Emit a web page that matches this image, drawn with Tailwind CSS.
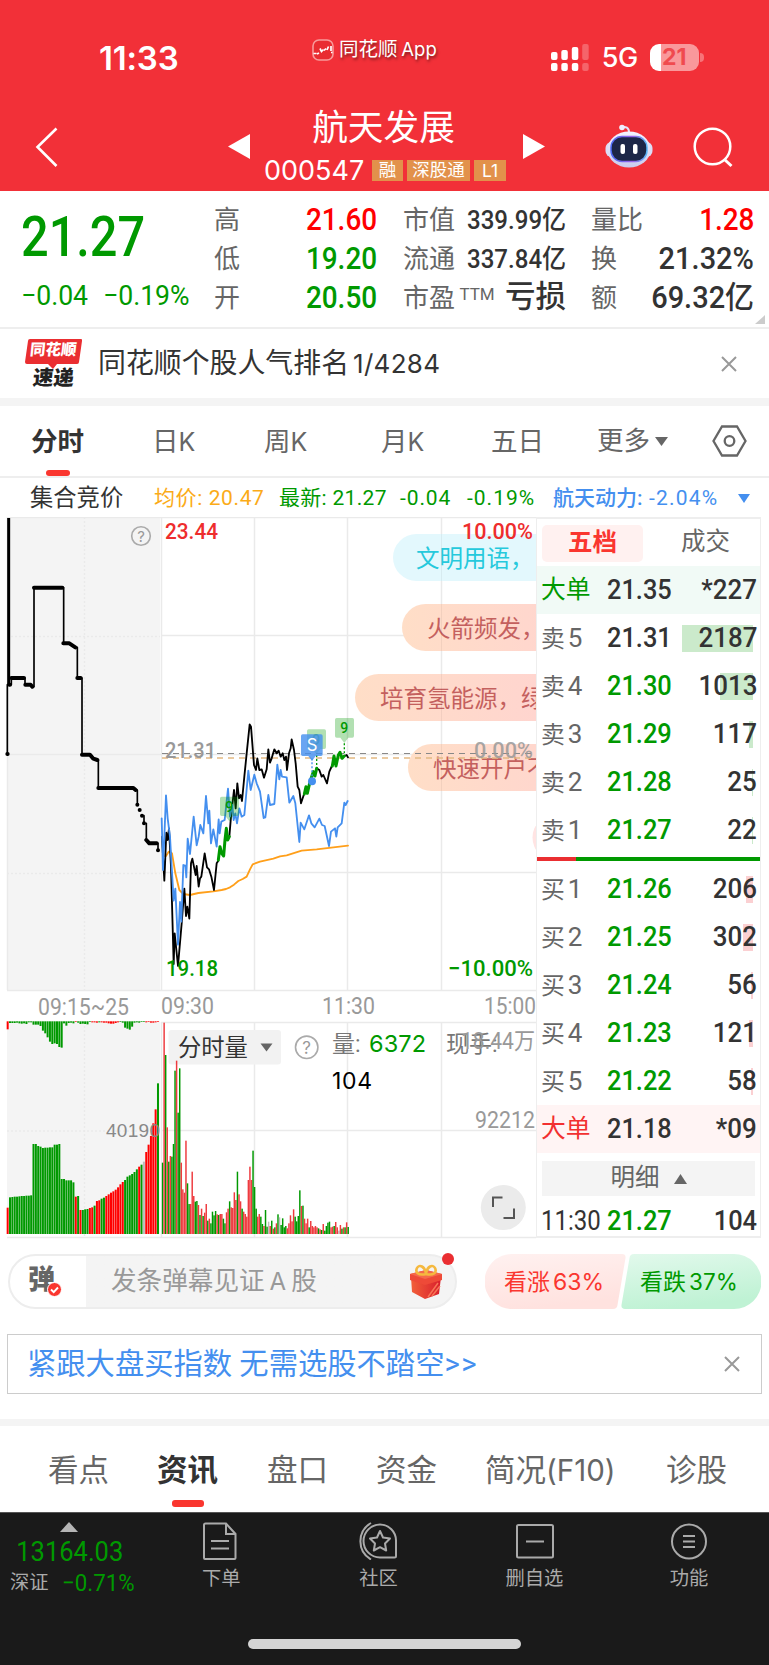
<!DOCTYPE html>
<html lang="zh-CN">
<head>
  <meta charset="UTF-8" />
  <meta name="viewport" content="width=device-width, initial-scale=1.0" />
  <title>航天发展 000547</title>
  <script src="https://cdn.jsdelivr.net/npm/@tailwindcss/browser@4"></script>
</head>
<body class="bg-white">
<div class="w-[769px] h-[1665px] overflow-hidden flex flex-col bg-white text-[#333] leading-none whitespace-nowrap font-[Roboto,'Noto_Sans_CJK_SC',sans-serif]">

  <!-- Header -->
  <header class="h-[191px] shrink-0 bg-[#f23038] text-white">
    <div class="h-[100px] flex items-start">
      <div class="ml-[99px] mt-[42px] w-[83px] font-[Inter] font-semibold text-[33px] leading-[32px] tracking-[-0.2px]">11:33</div>
      <div class="ml-[130px] mt-[37px] flex items-center gap-[5px] [text-shadow:1px_2px_3px_rgba(0,0,0,.5)]">
        <svg class="w-[22px] h-[22px]" viewBox="0 0 22 22"><rect x="1" y="1" width="20" height="20" rx="6" fill="#e92c31" stroke="#f79a9a" stroke-width="1.6"/><path d="M1.500 14.500h3M5 15l2-1M8 9.500l1.500 3 2-2M12 11.500l2-2M15 11l1.500-3.500M19 7v5M19 13.500h1.500" stroke="#fff" stroke-width="1.700" fill="none"/></svg>
        <span class="text-[19.5px] leading-[25px]">同花顺 <span class="font-[Inter] text-[18.5px] -ml-[1px]">App</span></span>
      </div>
      <svg class="ml-[114px] mt-[43px] w-[40px] h-[28px] fill-white" viewBox="0 0 40 28">
        <rect x="0" y="9" width="6.500" height="8" rx="2"/><rect x="10.300" y="7" width="6.500" height="10" rx="2"/><rect x="20.800" y="4" width="6.500" height="13" rx="2"/><rect x="31.200" y="1" width="6.500" height="16" rx="2" opacity=".25"/>
        <rect x="0" y="20" width="6.500" height="8" rx="2"/><rect x="10.300" y="20" width="6.500" height="8" rx="2"/><rect x="20.800" y="20" width="6.500" height="8" rx="2"/><rect x="31.200" y="20" width="6.500" height="8" rx="2" opacity=".25"/>
      </svg>
      <div class="ml-[11px] mt-[44px] w-[37px] font-[Inter] font-medium text-[27px] leading-[28px] tracking-[-0.5px]">5G</div>
      <div class="ml-[11px] mt-[44px] w-[49px] h-[27px] rounded-[9px] bg-linear-to-r from-white from-22% to-[#f9989b] to-22% flex items-center justify-center font-[Inter] font-bold text-[23px] text-[#f04a4f]">21</div>
      <div class="ml-[1px] mt-[53px] w-[4px] h-[9px] rounded-r-full bg-[#f77378]"></div>
    </div>
    <div class="h-[91px] flex items-start">
      <svg class="ml-[35px] mt-[26px] w-[24px] h-[42px]" viewBox="0 0 24 42"><path d="M21.500 2.500L2.500 21l19 19" fill="none" stroke="#fff" stroke-width="2.600"/></svg>
      <svg class="ml-[169px] mt-[34px] w-[22px] h-[25px]" viewBox="0 0 22 25"><path d="M22 0v25L0 12.500z" fill="#fff"/></svg>
      <div class="ml-[15px] w-[242px] flex flex-col items-center">
        <div class="mt-[8px] h-[40px] leading-[40px] text-[35.7px] -ml-[5px]">航天发展</div>
        <div class="mt-[12px] flex items-center self-stretch h-[21px] text-[17.5px]">
          <span class="w-[108px] -ml-px font-[Inter] text-[27px]">000547</span>
          <span class="w-[31px] h-[21px] leading-[21px] text-center bg-[#e2914b]">融</span>
          <span class="ml-[4px] w-[63px] h-[21px] leading-[21px] text-center bg-[#e2914b]">深股通</span>
          <span class="ml-[4px] w-[32px] h-[21px] leading-[21px] text-center bg-[#e2914b] font-[Inter]">L1</span>
        </div>
      </div>
      <svg class="ml-[16px] mt-[34px] w-[22px] h-[25px]" viewBox="0 0 22 25"><path d="M0 0v25l22-12.500z" fill="#fff"/></svg>
      <svg class="ml-[60px] mt-[24px] w-[48px] h-[44px]" viewBox="0 0 48 44">
        <defs>
          <linearGradient id="shell" x2="0" y2="1"><stop stop-color="#f4f3ff"/><stop offset="1" stop-color="#c9cbee"/></linearGradient>
          <linearGradient id="rim"><stop stop-color="#4d6cf5"/><stop offset=".6" stop-color="#9a62e8"/><stop offset="1" stop-color="#59b8f7"/></linearGradient>
        </defs>
        <path d="M16 3.500c5-1.500 8 0 8 5" fill="none" stroke="#e5e4fa" stroke-width="2"/><circle cx="17" cy="3.500" r="2.800" fill="#efeefe"/>
        <rect x=".5" y="18" width="47" height="15" rx="6" fill="#dcdcf6"/>
        <ellipse cx="24" cy="25.500" rx="21.500" ry="18" fill="url(#shell)"/>
        <rect x="6" y="12.500" width="36" height="25" rx="11" fill="#1c2647" stroke="url(#rim)" stroke-width="1.500"/>
        <rect x="15.500" y="20" width="4.500" height="10" rx="2" fill="#fff"/><rect x="28" y="20" width="4.500" height="10" rx="2" fill="#fff"/>
      </svg>
      <svg class="ml-[40px] mt-[27px] w-[42px] h-[42px]" viewBox="0 0 42 42" fill="none" stroke="#fff" stroke-width="2.500"><circle cx="19.500" cy="19.500" r="17.800"/><path d="M31.500 32.500l7 6.500" stroke-width="3"/></svg>
    </div>
  </header>

  <!-- Quote -->
  <section class="h-[138px] shrink-0 border-b-2 border-[#eee] flex relative">
    <div class="w-[214px] pl-[21px] text-[#090]">
      <div class="mt-[20px] h-[52px] leading-[52px] text-[55px] font-medium origin-left scale-x-[.885]">21.27</div>
      <div class="mt-[17px] flex text-[28px] leading-[32px]">
        <span class="w-[82px] origin-left scale-x-[.95]">−0.04</span><span class="origin-left scale-x-[.95]">−0.19%</span>
      </div>
    </div>
    <div class="w-[163px] pt-[9px] text-[26px] text-[#666]">
      <div class="flex h-[39px] items-center justify-between"><span>高</span><b class="font-medium text-[31px] text-[#f00] origin-right scale-x-[.9]">21.60</b></div>
      <div class="flex h-[39px] items-center justify-between"><span>低</span><b class="font-medium text-[31px] text-[#090] origin-right scale-x-[.9]">19.20</b></div>
      <div class="flex h-[39px] items-center justify-between"><span>开</span><b class="font-medium text-[31px] text-[#090] origin-right scale-x-[.9]">20.50</b></div>
    </div>
    <div class="ml-[26px] w-[163px] pt-[9px] text-[26px] text-[#666]">
      <div class="flex h-[39px] items-center justify-between"><span>市值</span><b class="font-medium text-[26px] text-[#333] origin-right scale-x-[.925]">339.99亿</b></div>
      <div class="flex h-[39px] items-center justify-between"><span>流通</span><b class="font-medium text-[26px] text-[#333] origin-right scale-x-[.925]">337.84亿</b></div>
      <div class="flex h-[39px] items-center justify-between"><span>市盈</span><span class="text-[17px] -mt-[6px] -ml-[6px]">TTM</span><b class="font-medium text-[30.5px] text-[#333]">亏损</b></div>
    </div>
    <div class="ml-[25px] w-[163px] pt-[9px] text-[26px] text-[#666]">
      <div class="flex h-[39px] items-center justify-between"><span>量比</span><b class="font-medium text-[31px] text-[#f00] origin-right scale-x-[.9]">1.28</b></div>
      <div class="flex h-[39px] items-center justify-between"><span>换</span><b class="font-medium text-[31px] text-[#333] origin-right scale-x-[.935]">21.32%</b></div>
      <div class="flex h-[39px] items-center justify-between"><span>额</span><b class="font-medium text-[31px] text-[#333] origin-right scale-x-[.935]">69.32亿</b></div>
    </div>
    <svg class="absolute right-[4px] bottom-[3px] w-[10px] h-[9px]" viewBox="0 0 10 9"><path d="M10 0v9H0z" fill="#ccc"/></svg>
  </section>

  <!-- News -->
  <section class="h-[69px] shrink-0 flex items-center pl-[24px] pr-[32px]">
    <div class="w-[58px] flex flex-col items-center">
      <div class="relative w-[57px] h-[25px] flex items-center justify-center">
        <svg class="absolute inset-0 w-[57px] h-[30px]" viewBox="0 0 57 30"><path d="M5 0h51a1.500 1.500 0 0 1 1 2l-3 21a2 2 0 0 1-2 2H32l-4 5-5-5H2a2 2 0 0 1-2-2L3 2a2 2 0 0 1 2-2z" fill="#ea2e31"/></svg>
        <span class="relative text-white font-black text-[15.5px] -skew-x-6">同花顺</span>
      </div>
      <div class="mt-[3px] text-[20.5px] leading-[22px] font-black text-[#222] -skew-x-6">速递</div>
    </div>
    <div class="ml-[16px] text-[27.9px]">同花顺个股人气排名<span class="ml-[4px] font-[Inter] text-[26px] tracking-[.3px]">1/4284</span></div>
    <svg class="ml-auto w-[16px] h-[16px]" viewBox="0 0 16 16"><path d="M1 1l14 14M15 1L1 15" stroke="#999" stroke-width="2"/></svg>
  </section>
  <div class="h-[8px] shrink-0 bg-[#f4f4f4]"></div>

  <!-- Period tabs -->
  <nav class="h-[72px] shrink-0 border-b-2 border-[#eee] flex text-[26.5px] text-[#666] leading-[72px]">
    <div class="relative ml-[31px] w-[121px] font-bold text-[#333]">分时<i class="absolute left-[15px] bottom-0 w-[24px] h-[6px] rounded-[3px] bg-[#fa362f]"></i></div>
    <div class="w-[112px]">日<span class="font-[Inter] text-[25px]">K</span></div>
    <div class="w-[117px]">周<span class="font-[Inter] text-[25px]">K</span></div>
    <div class="w-[110px]">月<span class="font-[Inter] text-[25px]">K</span></div>
    <div class="w-[106px]">五日</div>
    <div class="w-[115px] flex items-center gap-[5px]">更多<svg class="w-[13px] h-[9px]" viewBox="0 0 13 9"><path d="M0 0h13L6.500 9z" fill="#666"/></svg></div>
    <svg class="self-center w-[35px] h-[32px]" viewBox="0 0 35 32" fill="none" stroke="#666" stroke-width="2.300"><path d="M10 1.500h15L33.500 16 25 30.500H10L1.500 16z"/><circle cx="17.500" cy="16" r="4.800"/></svg>
  </nav>

  <!-- Price summary line -->
  <div class="h-[39px] shrink-0 pt-[2px] flex items-center text-[21px] text-[#090]">
    <span class="ml-[30px] w-[124px] text-[23.3px]">
      <span class="text-[#333]">集合竞价</span></span>
    <span class="w-[125px] text-[#fbab18] tracking-[.6px]">均价: 20.47</span>
    <span class="w-[121px] tracking-[.3px]">最新: 21.27</span>
    <span class="w-[67px] tracking-[.9px]">-0.04</span>
    <span class="w-[86px] tracking-[1px]">-0.19%</span>
    <span class="w-[185px] text-[#448fef] tracking-[1.2px]"><b class="font-medium tracking-normal">航天动力:</b> -2.04%</span>
    <svg class="w-[12px] h-[9px]" viewBox="0 0 12 9"><path d="M0 0h12L6 9z" fill="#448fef"/></svg>
  </div>

  <!-- Charts and order book -->
  <main class="h-[722px] shrink-0 flex">
    <svg class="w-[536px] h-[722px]" viewBox="0 517 536 722">
      <defs>
        <linearGradient id="peach"><stop stop-color="#ffdec7"/><stop offset="1" stop-color="#ffd0d3"/></linearGradient>
      </defs>
      <rect x="7" y="517" width="153" height="473" fill="#f4f4f4"/>
      <rect x="7" y="1021" width="153" height="213" fill="#f4f4f4"/>
      <g stroke="#eaeaea" stroke-width="1.500" fill="none">
        <path d="M7 517.500H536M161 635.500H536M7 754.500H536M161 872.500H536M7 990.500H536M161 1022.500H536M161 1130.500H536M7 1237.500H536"/>
        <path d="M161.500 517V990M254.500 517V990M347.500 517V990M441.500 517V990M254.500 1022V1237M347.500 1022V1237M441.500 1022V1237M161.500 1022V1237M7.500 517V990"/>
        <path d="M84.500 517V990M84.500 1022V1237M7 636.500H160M7 873.500H160M7 1131H160" stroke-dasharray="2 2"/>
      </g>

      <!-- Floating comments -->
      <g font-size="23.500">
        <rect x="393" y="534" width="180" height="47" rx="23.500" fill="#e3f8fd"/><text x="416" y="567" fill="#26c9dc">文明用语，</text>
        <rect x="402" y="604" width="250" height="47" rx="23.500" fill="url(#peach)"/><text x="427" y="637" fill="#c4605e">火箭频发，</text>
        <rect x="355" y="674" width="280" height="47" rx="23.500" fill="url(#peach)"/><text x="380" y="707" fill="#c4605e">培育氢能源，绿</text>
        <rect x="408" y="744" width="250" height="47" rx="23.500" fill="url(#peach)"/><text x="433" y="777" fill="#c4605e">快速开户不</text>
        <rect x="532.500" y="814" width="50" height="47" rx="23.500" fill="#ffe4e3"/>
      </g>
      <path d="M441.500 534V581M441.500 604V651M441.500 674V721M441.500 744V791" stroke="#000" stroke-opacity=".05"/>

      <path d="M162 753.500H535" stroke="#888" stroke-width="1.200" stroke-dasharray="6 5"/>
      <path d="M162 758H535" stroke="#e3b982" stroke-width="1.400" stroke-dasharray="6 5"/>

      <!-- Call auction line -->
      <g transform="translate(0 510) scale(.33333)" fill="none" stroke="#000" stroke-linecap="round" stroke-linejoin="round">
        <path stroke-width="5" d="M22 732V524M34 504V524M75 504V524M102 530V233M191 233V400M232 412V504M246 504V734M295 750V834M412 840V884M432 917V940M439 940V990M474 1000V1021"/>
        <path stroke-width="9" stroke-linecap="butt" d="M26 24V524"/>
        <path stroke-width="12" d="M22 732h1M28 524h2M34 504H72M76 524H92L97 530M102 233H187M190 400H208L226 412M232 504H242M246 734H270L280 746 292 750M295 834H400L407 840M412 884h.1M419 900h.1M426 917h.1M432 940h.1M439 990L448 1000H470M474 1021h.1"/>
      </g>

      <!-- Intraday lines -->
      <g transform="translate(150 690) scale(.33333)" fill="none" stroke-width="5.500" stroke-linejoin="round" stroke-linecap="round">
        <polyline stroke="#ff9f1a" points="36,455 42,498 48,498 56,485 66,490 76,550 88,600 100,612 120,615 145,609 190,604 215,600 228,597 240,592 252,584 265,573 278,567 290,560 300,538 308,523 330,515 370,506 390,499 410,496 455,482 500,478 594,467"/>
        <polyline stroke="#000" points="36,440 43,572 49,428 53,450 57,415 63,530 71,822 74,730 84,828 95,700 103,596 108,678 112,650 118,686 123,520 127,506 137,555 140,528 146,590 150,565 154,560 164,490 171,532 177,538 184,560 192,600 200,520 205,512"/>
        <polyline stroke="#000" points="238,440 243,380 252,300 257,355 262,280 267,325 272,315 276,333 283,260 290,190 299,103 303,110 312,225 318,240 322,205 328,240 335,238 342,263 350,238 355,178 360,218 365,205 373,178 380,190 386,182 392,200 398,190 403,210 408,200 411,240 417,190 422,175 425,148 432,180 437,220 443,290 448,300 453,340 463,310"/>
        <polyline stroke="#000" points="500,235 508,240 515,260 520,255 531,280 538,245 547,225"/>
        <polyline stroke="#000" points="583,198 590,195 594,202"/>
        <polyline stroke="#448fef" points="35,385 39,540 48,316 53,385 60,440 65,530 71,632 76,596 84,764 90,636 94,695 100,525 106,527 109,562 113,446 120,492 131,380 140,466 146,440 151,405 160,430 168,318 175,400 178,362 183,460 190,418 200,470 206,388 209,430 214,395 224,390 234,296 240,380 247,345 251,390 256,370 261,400 268,355 275,380 283,375 295,242 302,300 313,254 320,280 330,305 341,384 346,382 355,315 360,345 373,342 382,224 388,268 392,240 396,260 410,262 418,338 430,318 436,340 448,456 452,398 463,418 477,376 484,400 494,412 508,386 516,405 524,408 537,468 543,425 555,415 559,440 563,412 575,400 583,338 587,345 593,333"/>
        <g stroke="#090" stroke-width="9">
          <polyline points="205,510 210,470 215,490 221,498 225,450 229,415 233,450 238,440"/>
          <polyline points="463,312 468,290 472,310 480,275 490,245 495,258 500,235"/>
          <polyline points="547,228 552,198 558,228 565,195 570,187 576,205 583,198"/>
        </g>
        <!-- Signal markers -->
        <g fill="#090" fill-opacity=".3" stroke="none">
          <path d="M555 89q0-5 5-5h47q5 0 5 5v49q0 5-5 5h-12l-12 16-12-16h-11q-5 0-5-5z"/>
          <path d="M471 123q0-5 5-5h47q5 0 5 5v49q0 5-5 5h-12l-12 16-12-16h-11q-5 0-5-5z"/>
          <path d="M210 325q0-5 5-5h47q5 0 5 5v48q0 5-5 5h-12l-12 16-12-16h-11q-5 0-5-5z"/>
        </g>
        <path d="M583 160V192M500 195V235" stroke="#090" stroke-width="4" stroke-dasharray="6 6" stroke-linecap="butt"/>
        <g font-family="Roboto" font-weight="500" font-size="42" fill="#090" stroke="none" text-anchor="middle">
          <text x="583" y="130">9</text><text x="499" y="164" opacity=".6">9</text><text x="238" y="365">9</text>
        </g>
        <path d="M458 133h55q5 0 5 5v55q0 5-5 5h-16l-11 15-11-15h-17q-5 0-5-5v-55q0-5 5-5z" fill="#448fef" fill-opacity=".8"/>
        <text x="486" y="184" font-family="Inter" font-size="50" fill="#fff" text-anchor="middle">S</text>
        <path d="M486 205V265" stroke="#448fef" stroke-width="4" stroke-dasharray="6 6" stroke-linecap="butt"/>
        <circle cx="486" cy="274" r="12" fill="#448fef"/>
      </g>

      <!-- Price scale and time axis -->
      <g font-size="22.500" font-weight="500">
        <text x="165" y="539" fill="#ee2d2d" textLength="53" lengthAdjust="spacingAndGlyphs">23.44</text>
        <text x="462" y="539" fill="#ee2d2d" textLength="71" lengthAdjust="spacingAndGlyphs">10.00%</text>
        <text x="165" y="758" fill="#999" textLength="51" lengthAdjust="spacingAndGlyphs">21.31</text>
        <text x="474" y="758" fill="#999" fill-opacity=".85" textLength="59" lengthAdjust="spacingAndGlyphs">0.00%</text>
        <text x="166" y="976" fill="#090" textLength="52" lengthAdjust="spacingAndGlyphs">19.18</text>
        <text x="448" y="976" fill="#090" textLength="85" lengthAdjust="spacingAndGlyphs">−10.00%</text>
      </g>
      <g font-size="23" fill="#999">
        <text x="38" y="1015" textLength="91" lengthAdjust="spacingAndGlyphs">09:15~25</text>
        <text x="161" y="1013.500" textLength="53" lengthAdjust="spacingAndGlyphs">09:30</text>
        <text x="322" y="1013.500" textLength="53" lengthAdjust="spacingAndGlyphs">11:30</text>
        <text x="484" y="1013.500" textLength="52" lengthAdjust="spacingAndGlyphs">15:00</text>
      </g>
      <g fill="#fff" stroke="#aaa" stroke-width="1.600"><circle cx="141" cy="536" r="9.300" fill="none"/><circle cx="306.700" cy="1047.300" r="11.200"/></g>
      <g text-anchor="middle" font-family="Inter" fill="#999"><text x="141" y="541.500" font-size="15">?</text><text x="306.700" y="1053.500" font-size="17">?</text></g>

      <!-- Volume -->
      <rect x="168.500" y="1030" width="112.500" height="34.500" rx="3" fill="#f2f2f2"/>
      <g id="volume" transform="translate(0 980) scale(.33333)"></g>
      <text x="178" y="1056" font-size="23.300" fill="#333">分时量</text>
      <path d="M260.500 1043.500h12l-6 8z" fill="#666"/>
      <text x="332" y="1052" font-size="23" fill="#777">量:</text>
      <text x="369" y="1051.500" font-size="23.500" font-family="Inter" fill="#090" textLength="57">6372</text>
      <text x="446" y="1052" font-size="23" fill="#777">现手:</text>
      <text x="461" y="1049" font-size="23" fill="#999" textLength="74" lengthAdjust="spacingAndGlyphs">18.44万</text>
      <text x="332" y="1089" font-size="23" font-family="Inter" fill="#000" textLength="40">104</text>
      <text x="475" y="1128" font-size="23" fill="#999" textLength="60" lengthAdjust="spacingAndGlyphs">92212</text>
      <text x="106" y="1137" font-size="19" font-family="Liberation Sans" fill="#888" textLength="54">40190</text>
      <circle cx="503.300" cy="1207.600" r="22.500" fill="#ebebeb"/>
      <path d="M493 1207v-9.500h9.500M514 1208.500v9.500h-10.500" fill="none" stroke="#555" stroke-width="2"/>
    </svg>

    <!-- Order book -->
    <aside class="w-[225px] h-[721px] border-r border-l border-y-2 border-[#eee] flex flex-col">
      <div class="h-[47px] flex items-center pl-[5px] text-[24.5px] shrink-0">
        <div class="mt-[1px] w-[101px] h-[37px] leading-[36px] rounded-[5px] bg-[#fff1f0] text-center font-bold text-[#fa362f]">五档</div>
        <div class="ml-[38px] text-[#666]">成交</div>
      </div>
      <div id="asks"></div>
      <div class="mt-[3px] mb-[4px] h-[4px] shrink-0 bg-linear-to-r from-[#ea2e31] from-[39px] to-[#090] to-[39px]"></div>
      <div id="bids"></div>
      <div class="mt-[8px] mx-[5px] h-[35px] shrink-0 bg-[#f4f4f4] flex items-center justify-center gap-[14px] text-[24.5px] text-[#666]">明细<svg class="w-[13px] h-[10px]" viewBox="0 0 13 10"><path d="M0 10h13L6.500 0z" fill="#666"/></svg></div>
      <div class="h-[42px] shrink-0 mt-[4px] flex items-center pl-[4px] pr-[3px] text-[27px]">
        <span class="w-[66px]"><span class="inline-block origin-left scale-x-[.89]">11:30</span></span><b class="font-medium text-[#090] origin-left scale-x-[.94]">21.27</b><span class="ml-auto font-medium origin-right scale-x-[.94]">104</span>
      </div>
    </aside>
  </main>

  <!-- Comment bar -->
  <section class="h-[85px] shrink-0 pt-[14.500px] flex">
    <div class="relative ml-[8px] w-[449px] h-[55px] rounded-full border-2 border-[#ededed] bg-linear-to-r from-white from-[76px] to-[#f4f4f4] to-[76px] flex items-center">
      <span class="ml-[18px] text-[27px] font-black text-[#666] -mt-[2px]">弹</span>
      <svg class="-ml-[8px] mt-[17px] w-[15px] h-[15px]" viewBox="0 0 15 15"><circle cx="7.500" cy="7.500" r="7" fill="#fa362f" stroke="#fff"/><path d="M4 7.500l2.700 2.700L11 5.500" fill="none" stroke="#fff" stroke-width="1.900"/></svg>
      <span class="ml-[49px] mt-[2px] text-[25.6px] text-[#999]">发条弹幕见证<span class="mx-[5px] font-[Inter] text-[24px]">A</span>股</span>
      <svg class="absolute right-[12px] top-[8px] w-[34px] h-[36px]" viewBox="0 0 34 36">
        <defs><linearGradient id="box"><stop stop-color="#f2603a"/><stop offset="1" stop-color="#d81e2c"/></linearGradient></defs>
        <path d="M2 13l15 6 15-6-2 17-14 5-13-7z" fill="url(#box)"/><path d="M1 10l16-4 16 4v6l-17 5L1 16z" fill="#ee4a38"/><path d="M1 10l16-4 16 4-17 5z" fill="#f5694b"/><path d="M19 33l10-14M23 32l8-10" stroke="#f77455" stroke-width="1.500"/>
        <path d="M17 10C9 12 6 8 8 4s8-2 9 6c1-8 7-10 9-6s-1 8-9 6z" fill="none" stroke="#f5b93f" stroke-width="2.600"/>
      </svg>
      <i class="absolute right-[1px] -top-[3px] w-[12px] h-[12px] rounded-full bg-[#ea2e31]"></i>
    </div>
    <div class="relative ml-[28px] w-[276px] h-[55px] pt-[2px] flex items-center text-[23px]">
      <svg class="absolute inset-0 w-[276px] h-[55px]" viewBox="0 0 276 55">
        <defs>
          <linearGradient id="up" x2=".3" y2="1"><stop stop-color="#fff1f0"/><stop offset="1" stop-color="#ffe2df"/></linearGradient>
          <linearGradient id="down" x2=".3" y2="1"><stop stop-color="#e2f9ec"/><stop offset="1" stop-color="#bff2d4"/></linearGradient>
        </defs>
        <path d="M27 0h110q4 0 3.500 4l-8 47q-.5 4-4.500 4H27A27 27 0 0 1 27 0z" fill="url(#up)"/>
        <path d="M149 0h100a27 27 0 0 1 0 55H140q-4 0-3.500-4l8-47q.5-4 4.500-4z" fill="url(#down)"/>
      </svg>
      <span class="relative ml-[19px] w-[136px] text-[#fa362f]">看涨<span class="ml-[3px] font-[Inter] text-[23px]">63%</span></span>
      <span class="relative text-[#090]">看跌<span class="ml-[3px] font-[Inter] text-[22.5px]">37%</span></span>
    </div>
  </section>

  <!-- Promotion -->
  <section class="mt-[10px] mx-[7px] h-[60px] shrink-0 border border-[#ccc] flex items-center pl-[19px] pr-[21px]">
    <span class="mt-[2px] text-[29.3px]"><span class="text-[#448fef]">紧跟大盘买指数 无需选股不踏空<span class="tracking-[1.5px]">&gt;&gt;</span></span></span>
    <svg class="ml-auto w-[16px] h-[16px]" viewBox="0 0 16 16"><path d="M1 1l14 14M15 1L1 15" stroke="#999" stroke-width="2"/></svg>
  </section>
  <div class="mt-[25px] h-[7px] shrink-0 bg-[#f4f4f4]"></div>

  <!-- Content tabs -->
  <nav class="h-[86px] shrink-0 flex text-[30.5px] text-[#666] leading-[89px]">
    <div class="ml-[48px] w-[109px]">看点</div>
    <div class="relative w-[110px] font-bold text-[#333]">资讯<i class="absolute left-[15px] bottom-[5px] w-[32px] h-[7px] rounded-[3px] bg-[#fa362f]"></i></div>
    <div class="w-[109px]">盘口</div>
    <div class="w-[109px]">资金</div>
    <div class="w-[181px]">简况<span class="font-[Inter] text-[29.5px]">(F10)</span></div>
    <div>诊股</div>
  </nav>

  <!-- Bottom bar -->
  <footer class="relative h-[153px] shrink-0 bg-[#1a1a1a] border-t border-[#555] text-[19.3px] text-[#aaa] flex">
    <div class="w-[144px] flex flex-col items-center pr-[4px]">
      <svg class="mt-[9px] -ml-[3px] w-[18px] h-[10px]" viewBox="0 0 18 10"><path d="M0 10h18L9 0z" fill="#b5b5b5"/></svg>
      <div class="mt-[6px] text-[28px] leading-[28px] text-[#090] scale-x-[.91]">13164.03</div>
      <div class="mt-[4px] h-[26px] flex items-center self-stretch pl-[10px]"><span class="w-[53px] leading-[24px]">深证</span><span class="text-[24px] text-[#090] origin-left scale-x-[.93]">−0.71%</span></div>
    </div>
    <div class="w-[152px] flex flex-col items-center pt-[9px]">
      <svg class="w-[36px] h-[38px]" viewBox="0 0 36 38" fill="none" stroke="#aaa" stroke-width="2"><path d="M3.500 1.500H24L33.500 12v24q0 1-1 1H3q-1 0-1-1V3q0-1.500 1.500-1.500zM24 2v10h9.500M9 19h18M9 26.500h18"/></svg>
      <span class="mt-[7px] ml-[3px] leading-[24px]">下单</span>
    </div>
    <div class="w-[164px] flex flex-col items-center pt-[9px]">
      <svg class="w-[42px] h-[38px] -ml-[2px]" viewBox="0 0 42 38" fill="none" stroke="#aaa" stroke-width="2"><path d="M15 1A21 21 0 0 0 15 37.500"/><path d="M24 2.500a16.500 16.500 0 1 0 0 33H38.500q1.500 0 1.500-1.500V18.500A16 16 0 0 0 24 2.500z"/><path d="M24 9l3 6.500 7 1-5 5 1.200 7L24 25.200 17.800 28.500l1.200-7-5-5 7-1z" stroke-linejoin="round"/></svg>
      <span class="mt-[7px] ml-[2px] leading-[24px]">社区</span>
    </div>
    <div class="w-[150px] flex flex-col items-center pt-[9px]">
      <svg class="w-[40px] h-[38px] ml-[2px]" viewBox="0 0 40 38" fill="none" stroke="#aaa" stroke-width="2"><rect x="2" y="3" width="36" height="32.500" rx="1.500"/><path d="M11 19.500h18"/></svg>
      <span class="mt-[7px] leading-[24px]">删自选</span>
    </div>
    <div class="w-[160px] flex flex-col items-center pt-[9px]">
      <svg class="w-[38px] h-[38px]" viewBox="0 0 38 38" fill="none" stroke="#aaa" stroke-width="2"><circle cx="19" cy="19.500" r="17"/><path d="M13 14h12M13 19.500h12M13 25h12"/></svg>
      <span class="mt-[7px] leading-[24px]">功能</span>
    </div>
    <i class="absolute left-[248px] bottom-[16px] w-[273px] h-[10px] rounded-full bg-[#d4d4d4]"></i>
  </footer>
</div>

<script>
  const GREEN = "#009900", RED = "#ee3b3f", GRAY = "#bbbbbb";

  // --- Order book: label, price, volume, depth bar width ---

  const asks = [
    ["大单", "21.35", "*227", 0], ["卖5", "21.31", "2187", 71], ["卖4", "21.30", "1013", 33],
    ["卖3", "21.29", "117", 4], ["卖2", "21.28", "25", 1], ["卖1", "21.27", "22", 1]
  ];
  const bids = [
    ["买1", "21.26", "206", 7], ["买2", "21.25", "302", 10], ["买3", "21.24", "56", 2],
    ["买4", "21.23", "121", 4], ["买5", "21.22", "58", 2], ["大单", "21.18", "*09", 0]
  ];

  function orderRow([label, price, volume, bar], isAsk) {
    const big = label === "大单";
    const rowBg = big ? (isAsk ? "bg-[#f1faf6]" : "bg-[#fff4f4]") : "";
    const labelColor = big ? (isAsk ? "text-[#090]" : "text-[#f23030]") : "text-[#666]";
    const priceColor = big || price === "21.31" ? "text-[#333]" : "text-[#090]";
    const name = big ? label : `${label[0]}<span class="ml-[3px] text-[26px]">${label[1]}</span>`;
    return `<div class="relative h-[48px] pt-px flex items-center pl-[4px] pr-[3px] ${rowBg}">
      <i class="absolute right-[7px] h-[27px] ${isAsk ? "bg-[#cbeacb]" : "bg-[#fbd0d2]"}" style="width:${bar}px"></i>
      <span class="w-[66px] ${big ? "text-[24.8px]" : "text-[23.8px]"} ${labelColor}">${name}</span>
      <b class="font-medium text-[27px] origin-left scale-x-[.94] ${priceColor}">${price}</b>
      <b class="relative ml-auto font-medium text-[27px] origin-right scale-x-[.96]">${volume}</b>
    </div>`;
  }

  document.getElementById("asks").innerHTML = asks.map(r => orderRow(r, true)).join("");
  document.getElementById("bids").innerHTML = bids.map(r => orderRow(r, false)).join("");

  // --- Volume bars ---

  const BASE = 762;
  let bars = "";

  function addBar(x, y, w, h, color) {
    bars += `<rect x="${x}" y="${y}" width="${w}" height="${h}" fill="${color}"/>`;
  }

  const colors = { g: GREEN, r: RED, R: "#ff0000", x: GRAY };

  // Call auction: matched volume below, unmatched volume hanging from the top
  const matched = "683R 652g 651g 650g 650g 649g 648g 648g 647g 647g 646g 492g 492g 498g 500g 504g 503g 503g 502g 502g 494g 494g 492g 597g 597g 601g 601g 601g 607g 650R 648g 690R 690g 688g 687g 684R 682R 677g 663R 661R 656g 653g 648R 643R 638R 634R 629R 622R 613R 606R 600g 590g 586g 582g 576g 568g 560R 554g 545x 516R 494R 468R 430R 388R 310g".split(" ");
  const unmatched = "148R 129g 129g 129g 128g 130g 131g 130g 132g 127g 127g 134g 134g 134g 138g 152g 160g 172g 185g 192g 190g 192g 201g 203g 130g 137g 129g 128g 130g 126R 128g 132g 131g 132g 133g 126g 127R 127R 128R 127g 127R 128R 128R 130R 131R 131R 129R 127R 126g 128g 143g 146g 149g 140g 128g 127g 128g 126g 126g 127R 126R 128R 128R 127R 126R".split(" ");
  const step = (478 - 20) / matched.length;
  matched.forEach((v, i) => {
    const y = parseInt(v);
    addBar(20 + i * step, y, 6, BASE - y, colors[v.slice(-1)]);
  });
  unmatched.forEach((v, i) => {
    addBar(20 + i * step, 124, 6, Math.max(parseInt(v) - 124, 2), colors[v.slice(-1)]);
  });

  // Continuous trading, one bar per minute
  const minutes = "548g 128r 225g 442r 545g 528r 530g 492g 272g 242r 398g 265g 548r 628r 638r 482r 610g 672g 672r 575r 648r 665g 663g 675r 705g 686r 708g 698r 672r 722g 716r 730g 695g 706g 693g 703r 705g 702r 702r 716g 730g 697r 686r 664g 682r 684r 637r 660r 575g 643r 664r 686g 695r 702r 710r 600r 560r 600r 512g 621g 686g 710r 702r 710g 732g 738r 690g 740g 725x 738r 722g 746r 742g 730r 703g 712x 735g 715g 742g 738g 745r 730r 706r 724r 688r 710g 724g 708g 631g 678r 677g 716r 730r 716r 742g 723r 738r 742r 738r 742r 745g 748r 750g 732r 752g 738g 728g 725g 742r 740r 738g 726r 742r 752x 735r 746g 742r 742g 727r 741g".split(" ");
  minutes.forEach((v, i) => {
    const y = parseInt(v);
    addBar(485.5 + i * 4.68, y, 4.4, BASE - y, colors[v.slice(-1)]);
  });

  document.getElementById("volume").innerHTML = bars;
</script>
</body>
</html>
